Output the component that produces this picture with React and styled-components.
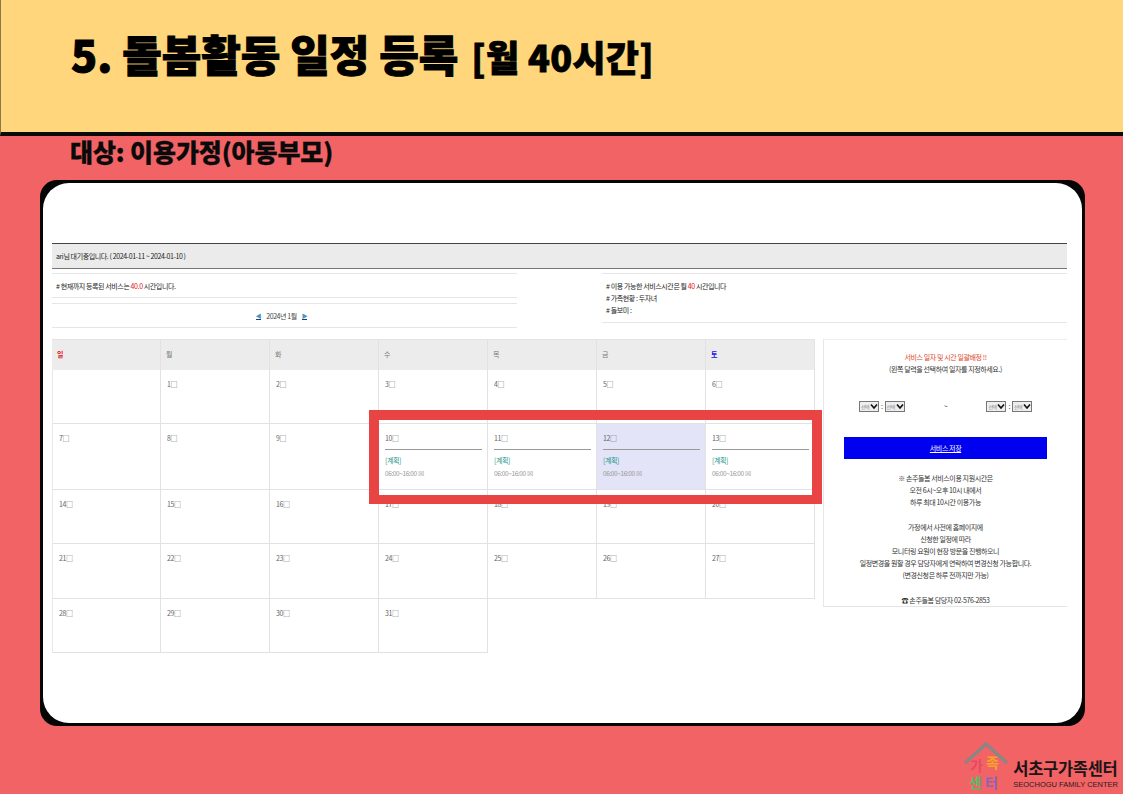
import React from 'react'
import styled, { createGlobalStyle } from 'styled-components'

const GlobalStyle = createGlobalStyle`
  html, body {
    margin: 0;
    padding: 0;
  }
  body {
    font-family: "Noto Sans CJK KR", "Noto Sans", sans-serif;
  }
`

const Page = styled.div`
  position: relative;
  width: 1123px;
  height: 794px;
  overflow: hidden;
  background: #f16364;
  display: flex;
  flex-direction: column;
`

const Header = styled.header`
  box-sizing: border-box;
  height: 136px;
  flex: none;
  background: #ffd67b;
  border-left: 1px solid #8a7a4a;
  border-bottom: 4px solid #0a0a0a;
  padding: 25px 0 0 70px;
  display: flex;
  align-items: baseline;
  color: #000;
  font-weight: 900;
  line-height: 56px;
`

const Title = styled.h1`
  margin: 0;
  font-size: 43px;
  font-weight: 900;
  letter-spacing: 0;
  -webkit-text-stroke: 1px #000;
`

const TitleNote = styled.span`
  margin-left: 13px;
  font-size: 36px;
  letter-spacing: 0.3px;
  -webkit-text-stroke: 0.8px #000;
`

const Target = styled.h2`
  margin: 0;
  flex: none;
  height: 44px;
  padding-left: 70px;
  font-size: 25px;
  line-height: 30px;
  font-weight: 900;
  letter-spacing: -0.1px;
  color: #0a0a0a;
  -webkit-text-stroke: 0.3px #0a0a0a;
`

const CardFrame = styled.div`
  box-sizing: border-box;
  flex: none;
  width: 1045px;
  height: 546px;
  margin-left: 40px;
  padding: 3px;
  background: #050505;
  border-radius: 17px;
  display: flex;
`

const Card = styled.main`
  box-sizing: border-box;
  flex: 1;
  min-width: 0;
  padding: 60px 15px 0 9px;
  background: #fff;
  border-radius: 26px;
  display: flex;
  flex-direction: column;
  font-size: 7px;
  letter-spacing: -0.4px;
`

const Notice = styled.div`
  box-sizing: border-box;
  height: 26px;
  flex: none;
  padding-left: 4px;
  background: #ebebeb;
  border-top: 1px solid #444;
  border-bottom: 1px solid #777;
  display: flex;
  align-items: center;
  color: #222;
`

const InfoRow = styled.div`
  display: flex;
  justify-content: space-between;
  margin-top: 4px;
  height: 55px;
  flex: none;
`

const InfoColumn = styled.div`
  width: 465px;
  display: flex;
  flex-direction: column;
  gap: 5px;
`

const InfoBox = styled.div`
  box-sizing: border-box;
  height: ${(props) => props.$height}px;
  padding-left: 4px;
  border-top: 1px solid #e6e6e6;
  border-bottom: 1px solid #e6e6e6;
  display: flex;
  flex-direction: column;
  justify-content: center;
  line-height: 12px;
  color: #222;
`

const MonthBox = styled(InfoBox)`
  flex-direction: row;
  align-items: center;
  justify-content: center;
  gap: 5px;
  padding: 0 6px 0 0;
  color: #444;
`

const Red = styled.span`
  color: #e01818;
`

const MonthLink = styled.span`
  color: #4a9ab0;
  border-bottom: 1px solid #2233aa;
  font-size: 6px;
  line-height: 7px;
`

const Body = styled.div`
  display: flex;
  gap: 8px;
  margin-top: 11px;
  align-items: flex-start;
`

const Calendar = styled.div`
  width: 763px;
  flex: none;
  display: grid;
  grid-template-columns: repeat(7, 1fr);
  grid-template-rows: 31px 54px 66px 54px 55px 54px;
`

const HeadCell = styled.div`
  box-sizing: border-box;
  background: #ececec;
  padding: 8px 5px 0;
  border-top: 1px solid #e4e4e4;
  border-right: 1px solid #e2e2e2;
  line-height: 12px;
  font-weight: ${(props) => (props.$color ? 700 : 400)};
  color: ${(props) => props.$color || '#777'};
`

const DayCell = styled.div`
  box-sizing: border-box;
  padding: 8px 5px 0 6px;
  border-bottom: 1px solid #e2e2e2;
  border-right: 1px solid #e2e2e2;
  border-left: ${(props) => (props.$first ? '1px solid #e8e8e8' : 'none')};
  background: ${(props) => (props.$selected ? '#e3e4f7' : '#fff')};
  line-height: 12px;
  color: #666;
`

const BlankCell = styled.div``

const DayRule = styled.div`
  height: 1px;
  margin: 5px 0 4px;
  background: #999;
`

const PlanLabel = styled.div`
  color: #1b9488;
  line-height: 13px;
`

const PlanTime = styled.div`
  color: #999;
  font-size: 6.5px;
  line-height: 13px;
  letter-spacing: -0.4px;
`

const SidePanel = styled.aside`
  box-sizing: border-box;
  width: 244px;
  height: 268px;
  flex: none;
  padding-top: 11px;
  border-top: 1px solid #eee;
  border-left: 1px solid #e8e8e8;
  border-bottom: 1px solid #e4e4e4;
  display: flex;
  flex-direction: column;
  align-items: center;
  line-height: 12.2px;
  color: #333;
  text-align: center;
`

const SideTitle = styled.div`
  color: #d9472b;
`

const TimeRow = styled.div`
  align-self: stretch;
  margin-top: 25px;
  padding: 0 35px;
  display: flex;
  justify-content: space-between;
  align-items: center;
`

const TimeGroup = styled.div`
  display: flex;
  align-items: center;
  gap: 2px;
`

const TimeSelect = styled.span`
  box-sizing: border-box;
  width: 20px;
  height: 11px;
  border: 1px solid #777;
  background: #eee;
  display: flex;
  align-items: center;
  justify-content: space-between;
  padding-left: 1px;
  font-size: 5px;
  line-height: 9px;
  letter-spacing: -0.5px;
  color: #888;
`

const SaveButton = styled.div`
  width: 203px;
  height: 23px;
  margin-top: 24px;
  background: #0000f0;
  color: #fff;
  display: flex;
  align-items: center;
  justify-content: center;
  text-decoration: underline;
`

const Notes = styled.div`
  margin-top: 13px;
`

const NoteGap = styled.div`
  height: 12.2px;
`

const Highlight = styled.div`
  position: absolute;
  left: 369px;
  top: 410px;
  width: 453px;
  height: 94px;
  box-sizing: border-box;
  border: 10px solid #e84444;
  border-bottom-width: 9px;
`

const Footer = styled.footer`
  flex: none;
  margin-top: 15px;
  padding-right: 5px;
  display: flex;
  justify-content: flex-end;
  align-items: flex-end;
  gap: 4px;
`

const BrandText = styled.div`
  display: flex;
  flex-direction: column;
  padding-top: 7px;
`

const BrandName = styled.div`
  font-size: 16.5px;
  line-height: 22px;
  font-weight: 700;
  color: #1d1416;
  letter-spacing: -0.3px;
`

const BrandSub = styled.div`
  font-family: "Liberation Sans", sans-serif;
  font-size: 7.5px;
  line-height: 12px;
  color: #2a1c1e;
  white-space: nowrap;
`

const headDays = [
  { name: '일', color: '#e01818' },
  { name: '월' },
  { name: '화' },
  { name: '수' },
  { name: '목' },
  { name: '금' },
  { name: '토', color: '#1010e0' },
]

// 2024년 1월: 첫 칸은 비어 있고 1일이 월요일에 시작
const days = [null, ...Array.from({ length: 31 }, (_, i) => i + 1)]
const planned = [10, 11, 12, 13]

const Chevron = () => (
  <svg width="8" height="7" viewBox="0 0 8 7">
    <path d="M1 1.5 L4 5 L7 1.5" fill="none" stroke="#111" strokeWidth="1.6" />
  </svg>
)

const LogoMark = () => (
  <svg width="46" height="50" viewBox="0 0 46 50">
    <path d="M2 22 L23 3 L44 22" fill="none" stroke="#8b8684" strokeWidth="3.4" />
    <g fontFamily="'Noto Sans CJK KR', sans-serif" fontWeight="700" fontSize="14">
      <text x="7" y="30" fill="#e9476a">가</text>
      <text x="23" y="27" fill="#f5a42a">족</text>
      <text x="6" y="47" fill="#57b96a">센</text>
      <text x="22" y="47" fill="#8a63b8">터</text>
    </g>
  </svg>
)

const TimePair = () => (
  <TimeGroup>
    <TimeSelect>선택<Chevron /></TimeSelect>
    :
    <TimeSelect>선택<Chevron /></TimeSelect>
  </TimeGroup>
)

const App = () => {
  return (
    <Page>
      <GlobalStyle />
      <Header>
        <Title>5. 돌봄활동 일정 등록</Title>
        <TitleNote>[월 40시간]</TitleNote>
      </Header>
      <Target>대상: 이용가정(아동부모)</Target>
      <CardFrame>
        <Card>
          <Notice>ari님 대기중입니다. ( 2024-01-11 ~ 2024-01-10 )</Notice>
          <InfoRow>
            <InfoColumn>
              <InfoBox $height={25}>
                <div># 현재까지 등록된 서비스는 <Red>40.0</Red> 시간입니다.</div>
              </InfoBox>
              <MonthBox $height={25}>
                <MonthLink>◀</MonthLink>
                2024년 1월
                <MonthLink>▶</MonthLink>
              </MonthBox>
            </InfoColumn>
            <InfoColumn>
              <InfoBox $height={50}>
                <div># 이용 가능한 서비스시간은 월 <Red>40</Red> 시간입니다</div>
                <div># 가족현황 : 두자녀</div>
                <div># 돌보미 :</div>
              </InfoBox>
            </InfoColumn>
          </InfoRow>
          <Body>
            <Calendar>
              {headDays.map((day) => (
                <HeadCell key={day.name} $color={day.color}>{day.name}</HeadCell>
              ))}
              {days.map((day, i) => (
                <DayCell key={i} $first={i % 7 === 0} $selected={day === 12}>
                  {day && `${day}□`}
                  {planned.includes(day) && (
                    <>
                      <DayRule />
                      <PlanLabel>[계획]</PlanLabel>
                      <PlanTime>06:00~16:00 ☒</PlanTime>
                    </>
                  )}
                </DayCell>
              ))}
              <BlankCell />
            </Calendar>
            <SidePanel>
              <SideTitle>서비스 일자 및 시간 일괄배정 !!</SideTitle>
              <div>(왼쪽 달력을 선택하여 일자를 지정하세요.)</div>
              <TimeRow>
                <TimePair />
                ~
                <TimePair />
              </TimeRow>
              <SaveButton>서비스 저장</SaveButton>
              <Notes>
                <div>※ 손주돌봄 서비스이용 지원시간은</div>
                <div>오전 6시~오후 10시 내에서</div>
                <div>하루 최대 10시간 이용가능</div>
                <NoteGap />
                <div>가정에서 사전에 홈페이지에</div>
                <div>신청한 일정에 따라</div>
                <div>모니터링 요원이 현장 방문을 진행하오니</div>
                <div>일정변경을 원할 경우 담당자에게 연락하여 변경신청 가능합니다.</div>
                <div>(변경신청은 하루 전까지만 가능)</div>
                <NoteGap />
                <div>☎ 손주돌봄 담당자 02-576-2853</div>
              </Notes>
            </SidePanel>
          </Body>
        </Card>
      </CardFrame>
      <Highlight />
      <Footer>
        <LogoMark />
        <BrandText>
          <BrandName>서초구가족센터</BrandName>
          <BrandSub>SEOCHOGU FAMILY CENTER</BrandSub>
        </BrandText>
      </Footer>
    </Page>
  )
}

export default App
